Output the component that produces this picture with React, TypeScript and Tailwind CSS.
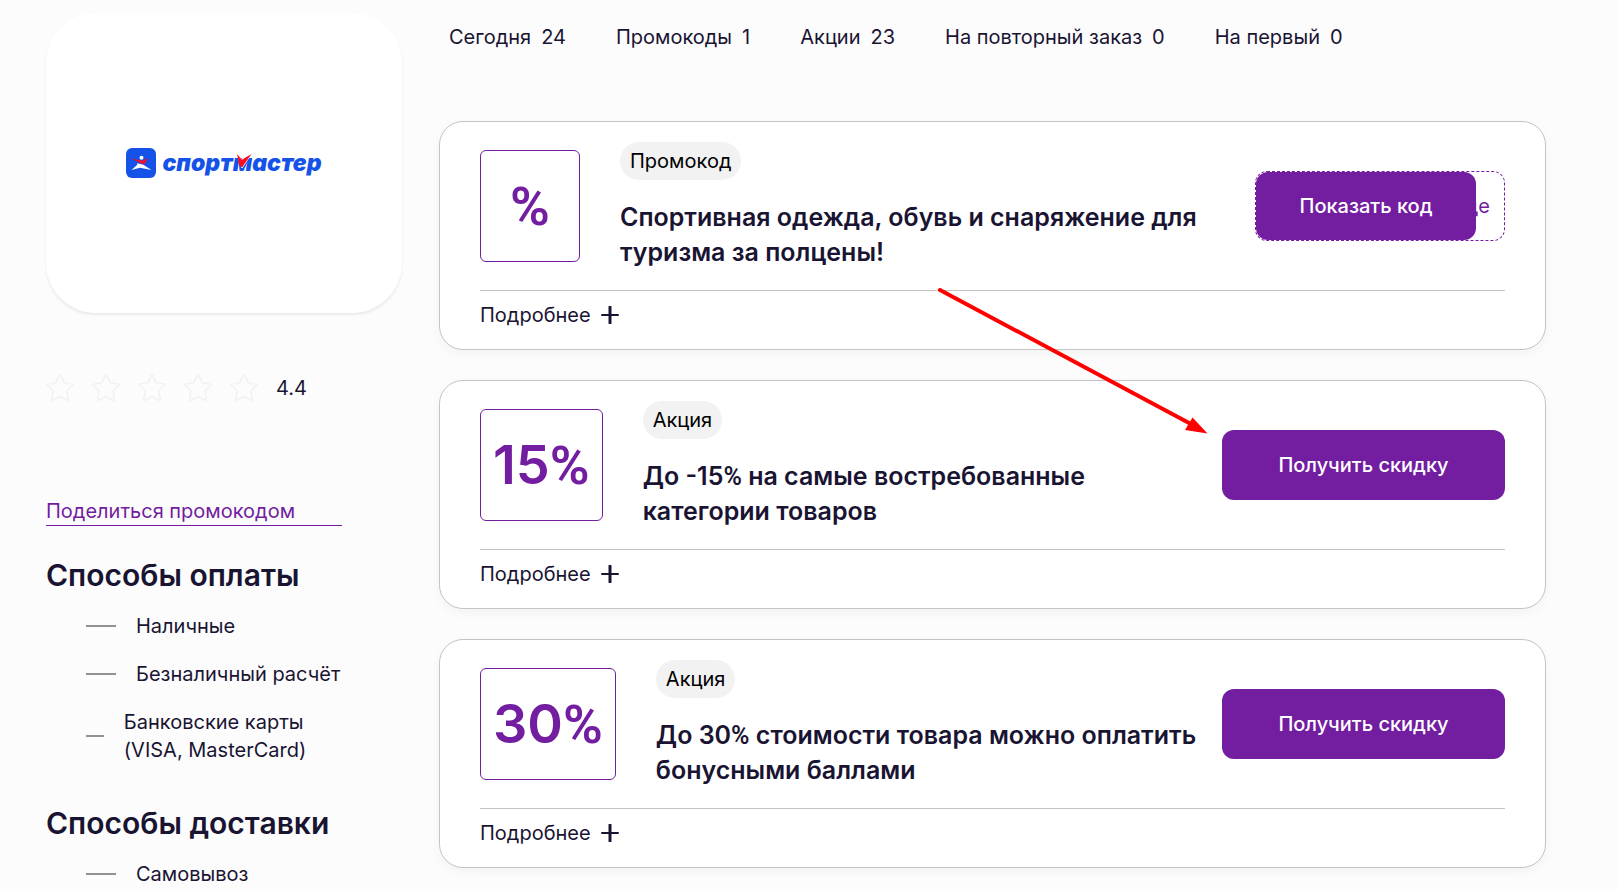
import { useState } from "react";

type Offer = {
  value: string;
  kind: string;
  title: string;
  code?: string;
};

const filters = [
  { label: "Сегодня", count: 24 },
  { label: "Промокоды", count: 1 },
  { label: "Акции", count: 23 },
  { label: "На повторный заказ", count: 0 },
  { label: "На первый", count: 0 },
];

const offers: Offer[] = [
  {
    value: "%",
    kind: "Промокод",
    title: "Спортивная одежда, обувь и снаряжение для туризма за полцены!",
    code: "де",
  },
  {
    value: "15%",
    kind: "Акция",
    title: "До -15% на самые востребованные категории товаров",
  },
  {
    value: "30%",
    kind: "Акция",
    title: "До 30% стоимости товара можно оплатить бонусными баллами",
  },
];

const payment = ["Наличные", "Безналичный расчёт", "Банковские карты (VISA, MasterCard)"];
const delivery = ["Самовывоз"];

function Logo() {
  return (
    <div className="flex items-center gap-[6px] text-[#1552e8]">
      <svg viewBox="0 0 30 30" className="size-[30px]" aria-hidden="true">
        <rect width="30" height="30" rx="6" fill="#1552e8" />
        <circle cx="15.5" cy="9.8" r="2" fill="#fff" />
        <path d="m11.5 15.2 5.8 1.6L25.5 22l-11.500-2.200L5.500 22l5.500-5z" fill="#fff" />
        <path d="M4.500 10.400 12.500 12l4 .8L22 10l-3.400 6-4.200-.8-3-2z" fill="#ff0a1e" />
      </svg>
      <span className="relative text-[23px] leading-[30px] font-black italic">
        спортмастер
        <svg viewBox="0 0 16 14" className="absolute top-[6px] left-[74px] h-[14px] w-[16px]" aria-hidden="true">
          <path d="M1 0 5.5 5.4 15.5 0 6 14z" fill="#fff" stroke="#fff" strokeWidth="1" />
          <path d="M1 0 5.8 5.8 15.5 0 6 13.5 3.2 11z" fill="#ff0a1e" />
        </svg>
      </span>
    </div>
  );
}

function Star() {
  return (
    <svg viewBox="0 0 28 28" className="size-7" fill="none" stroke="#f2f2f2" strokeWidth="1.6" strokeLinejoin="round" aria-hidden="true">
      <path d="M13.2 1.7q.8-1.2 1.6 0l3.3 6.7q.2.5.8.6l7.2 1q1.4.3.5 1.3l-5.2 5.2q-.5.4-.4 1l1.2 7.9q.2 1.4-1.1.8L14.6 23q-.6-.3-1.2 0l-6.5 3.2q-1.3.6-1.1-.8L7 17.5q.1-.6-.4-1l-5.2-5.2q-.9-1 .5-1.3l7.2-1q.6-.1.8-.6z" />
    </svg>
  );
}

// percent signs are set in the narrower Roboto glyph
function WithPercent({ text }: { text: string }) {
  return (
    <>
      {text.split(/(%)/).map((part, i) =>
        part === "%" ? (
          <span key={i} className="font-['Roboto',sans-serif]">
            %
          </span>
        ) : (
          part
        ),
      )}
    </>
  );
}

function DashList({ items }: { items: string[] }) {
  return (
    <ul className="mt-4 flex flex-col gap-5 pl-10">
      {items.map((item) => (
        <li key={item} className="flex items-center gap-5 leading-7">
          <span className="h-[2px] w-[30px] bg-[#929292]" />
          <span>{item}</span>
        </li>
      ))}
    </ul>
  );
}

function OfferCard({ offer }: { offer: Offer }) {
  const [open, setOpen] = useState(false);

  return (
    <article className="rounded-3xl border border-[#c4c4c4] bg-white px-10 pt-5 pb-5 shadow-[0_4px_12px_rgba(0,0,0,0.04)]">
      <div className="flex items-center border-b border-[#c4c4c4] pb-5">
        <div className="flex h-28 min-w-[100px] shrink-0 items-center justify-center rounded-md border border-[#731da0] px-3 text-[54px] leading-none font-semibold text-[#731da0]">
          <span>
            <WithPercent text={offer.value} />
          </span>
        </div>
        <div className="ml-10 min-w-0 flex-1">
          <span className="inline-flex h-[38px] items-center rounded-full bg-[#f2f2f2] px-[10px] align-top text-black">
            {offer.kind}
          </span>
          <h2 className="mt-5 text-[25px] leading-[35px] font-semibold">
            <WithPercent text={offer.title} />
          </h2>
        </div>
        {offer.code ? (
          <div className="relative ml-10 flex h-[70px] w-[250px] shrink-0 items-center justify-end rounded-xl border border-dashed border-[#731da0] pr-[14px] text-[#731da0]">
            {offer.code}
            <button
              type="button"
              className="absolute inset-y-0 left-0 w-[220px] rounded-xl bg-[#731da0] font-medium text-white"
            >
              Показать код
            </button>
          </div>
        ) : (
          <button
            type="button"
            className="ml-4 h-[70px] w-[283px] shrink-0 rounded-xl bg-[#731da0] font-medium text-white"
          >
            Получить скидку
          </button>
        )}
      </div>
      <button
        type="button"
        aria-expanded={open}
        onClick={() => setOpen(!open)}
        className="mt-[10px] flex items-center gap-[10px] leading-7"
      >
        Подробнее
        <svg viewBox="0 0 18 18" className="size-[18px]" stroke="#1a1433" strokeWidth="2" strokeLinecap="round" aria-hidden="true">
          <path d="M1 9h16" />
          {!open && <path d="M9 1v16" strokeWidth="3" />}
        </svg>
      </button>
    </article>
  );
}

export default function App() {
  return (
    <div className="flex h-screen items-start gap-[37px] overflow-hidden bg-[#fcfcfc] pr-[72px] pl-[46px] font-['Inter',sans-serif] text-[20px] text-[#1a1433]">
      <aside className="w-[356px] shrink-0 pt-[13px]">
        <div className="flex h-[300px] items-center justify-center rounded-[50px] bg-white shadow-[0_2px_3px_rgba(0,0,0,0.08)]">
          <Logo />
        </div>

        <div className="mt-[61px] flex items-center gap-[18px]">
          <div className="flex gap-[18px]" role="img" aria-label="4.4">
            {[1, 2, 3, 4, 5].map((n) => (
              <Star key={n} />
            ))}
          </div>
          <span className="leading-7">4.4</span>
        </div>

        <div className="mt-[95px] w-[296px]">
          <a href="#share" className="block border-b border-[#731da0] leading-7 text-[#731da0]">
            Поделиться промокодом
          </a>
          <h2 className="mt-7 text-[30px] leading-[42px] font-semibold">Способы оплаты</h2>
          <DashList items={payment} />
          <h2 className="mt-[38px] text-[30px] leading-[42px] font-semibold">Способы доставки</h2>
          <DashList items={delivery} />
        </div>
      </aside>

      <main className="relative min-w-0 flex-1 pt-[23px]">
        <nav className="flex gap-[50px] px-[10px] leading-7">
          {filters.map((f) => (
            <a key={f.label} href="#offers" className="flex gap-[10px]">
              <span>{f.label}</span>
              <span>{f.count}</span>
            </a>
          ))}
        </nav>

        <div id="offers" className="mt-[70px] flex flex-col gap-[30px]">
          {offers.map((offer) => (
            <OfferCard key={offer.title} offer={offer} />
          ))}
        </div>

        <svg
          viewBox="0 0 270 146"
          className="pointer-events-none absolute top-[288px] right-[338px] h-[146px] w-[270px]"
          aria-hidden="true"
        >
          <path d="M2 2 252 135.5" stroke="#f00" strokeWidth="4" strokeLinecap="round" />
          <path d="M269.5 145.5 247 142l7.5-12.5z" fill="#f00" />
        </svg>
      </main>
    </div>
  );
}
